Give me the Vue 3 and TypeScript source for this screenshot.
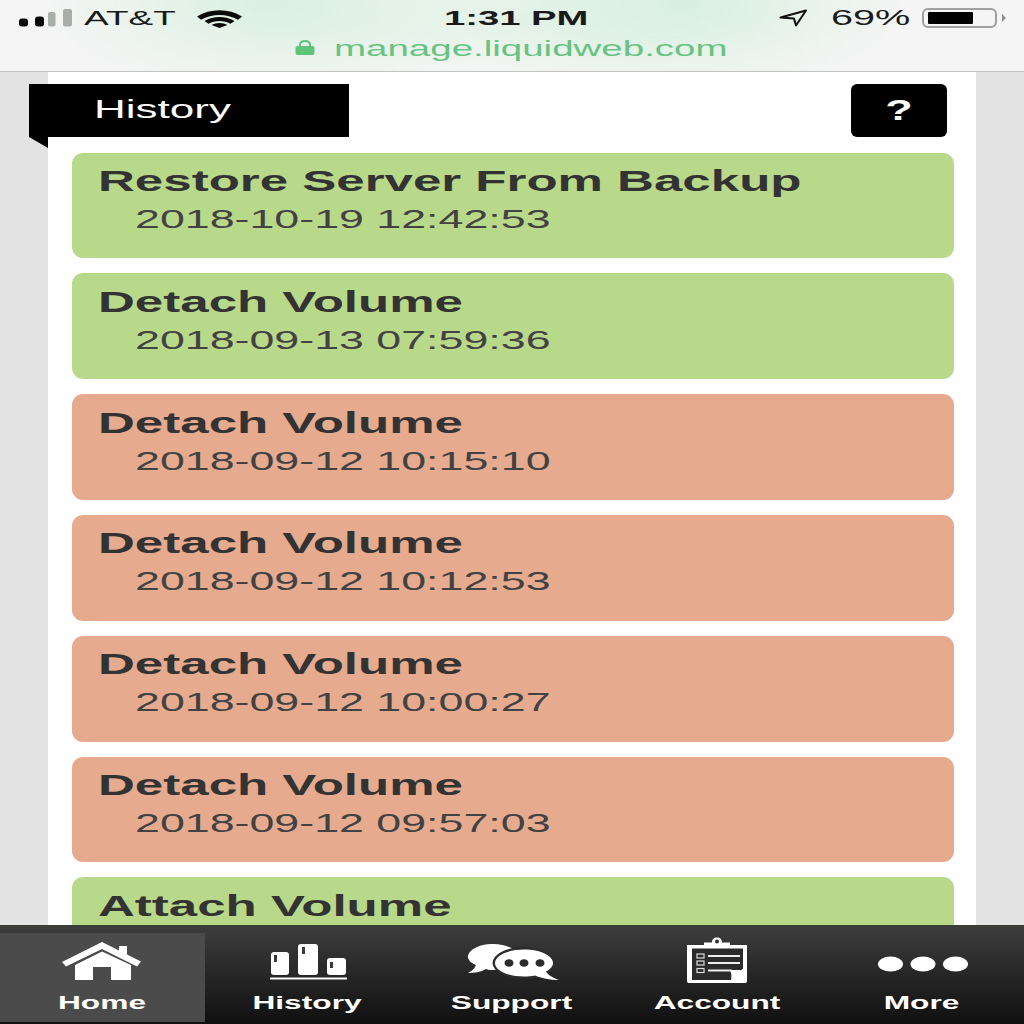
<script setup lang="ts">
interface Entry { title: string; date: string; ok: boolean }
const entries: Entry[] = [
  { title: 'Restore Server From Backup', date: '2018-10-19 12:42:53', ok: true },
  { title: 'Detach Volume', date: '2018-09-13 07:59:36', ok: true },
  { title: 'Detach Volume', date: '2018-09-12 10:15:10', ok: false },
  { title: 'Detach Volume', date: '2018-09-12 10:12:53', ok: false },
  { title: 'Detach Volume', date: '2018-09-12 10:00:27', ok: false },
  { title: 'Detach Volume', date: '2018-09-12 09:57:03', ok: false },
  { title: 'Attach Volume', date: '', ok: true },
]
</script>

<template>
  <div class="screen">
    <header class="chrome">
      <div class="status">
        <div class="left">
          <svg class="signal" width="54" height="18" viewBox="0 0 54 18">
            <rect x="0" y="9.500" width="9" height="8" rx="3" fill="#0a0a0a" />
            <rect x="16" y="7.500" width="9" height="10" rx="3" fill="#0a0a0a" />
            <rect x="29" y="3" width="7.500" height="14.500" rx="2" fill="#a9aeaa" />
            <rect x="44" y="0" width="9" height="17.500" rx="2" fill="#a9aeaa" />
          </svg>
          <span class="carrier"><span class="wide">AT&amp;T</span></span>
          <svg class="wifi" width="45" height="19" viewBox="0 -1 45 19">
            <path d="M0 6.500C13 -2 32 -2 45 6.500L41 9.800C30 3.500 15 3.500 4 9.800Z" fill="#0a0a0a" />
            <path d="M7.500 11C16 5.500 29 5.500 37.500 11L33.500 13.800C27 10 18 10 11.500 13.800Z" fill="#0a0a0a" />
            <path d="M14.500 15C19 12.300 26 12.300 30.500 15L22.500 18Z" fill="#0a0a0a" />
          </svg>
        </div>
        <span class="time"><span class="wide">1:31 PM</span></span>
        <div class="right">
          <svg class="arrow" width="29" height="18" viewBox="0 0 29 18">
            <path d="M1.500 8.500L27 1.500L17 16.500L15 9.500Z" fill="none" stroke="#111" stroke-width="2" stroke-linejoin="round" />
          </svg>
          <span class="pct"><span class="wide">69%</span></span>
          <div class="battery"><div class="charge"></div></div>
          <div class="nub"></div>
        </div>
      </div>
      <div class="url">
        <svg class="lock" width="20" height="15" viewBox="0 0 20 15">
          <path d="M5 7V5.200C5 2.600 7 1 10 1s5 1.600 5 4.200V7" fill="none" stroke="#5ec477" stroke-width="2" />
          <rect x="0.500" y="6" width="19" height="9" rx="2" fill="#5ec477" />
        </svg>
        <span class="host"><span class="wide">manage.liquidweb.com</span></span>
      </div>
    </header>

    <main class="viewport">
      <section class="page">
        <div class="head">
          <div class="flag"><span class="wide">History</span></div>
          <button class="help"><span class="wide">?</span></button>
        </div>
        <div class="list">
          <article v-for="(e, i) in entries" :key="i" class="card" :class="e.ok ? 'ok' : 'bad'">
            <div class="title"><span class="wide">{{ e.title }}</span></div>
            <div class="date"><span class="wide">{{ e.date }}</span></div>
          </article>
        </div>
      </section>
    </main>

    <nav class="tabs">
      <div class="tab active">
        <div class="icon">
          <svg width="80" height="40" viewBox="0 0 80 40">
            <path d="M0 20L40 0L57 8.500V4H65V12.500L79 19.500L75 24.500L40 7L4 24.500Z" fill="#fff" />
            <path d="M13 23L40 9.500L69 23V38H49V25H31V38H13Z" fill="#fff" />
          </svg>
        </div>
        <span class="label"><span class="wide">Home</span></span>
      </div>
      <div class="tab">
        <div class="icon">
          <svg class="bars" width="77" height="36" viewBox="0 0 77 36">
            <rect x="1" y="8" width="18" height="23" rx="3" fill="#fff" />
            <rect x="28" y="0" width="20" height="31" rx="3" fill="#fff" />
            <rect x="57" y="14" width="19" height="17" rx="3" fill="#fff" />
            <rect x="4" y="11" width="3" height="7" fill="#3a3a3a" />
            <rect x="32" y="3" width="3" height="7" fill="#3a3a3a" />
            <rect x="60" y="18" width="3" height="6" fill="#3a3a3a" />
            <rect x="0" y="33.500" width="77" height="2" fill="#fff" />
          </svg>
        </div>
        <span class="label"><span class="wide">History</span></span>
      </div>
      <div class="tab">
        <div class="icon">
          <svg class="chat" width="92" height="37" viewBox="0 0 92 37">
            <path d="M25 0C39 0 50 6 50 13C50 20 39 26 25 26C22 26 20 26 18 25C13 28 6 29 0 29C4 27 7 24 8 21C3 19 0 16 0 13C0 6 11 0 25 0Z" fill="#fff" />
            <ellipse cx="56" cy="19" rx="31.500" ry="16" fill="#2c2c2c" />
            <path d="M56 5.500C72 5.500 85 11.500 85 19C85 22.500 82 25.500 78 27.500C80 31 85 34 91 36C82 36 73 34 67 31.500C63.500 32.200 60 32.500 56 32.500C40 32.500 27 26.500 27 19C27 11.500 40 5.500 56 5.500Z" fill="#fff" />
            <ellipse cx="41" cy="19" rx="4.500" ry="3.800" fill="#2c2c2c" />
            <ellipse cx="56" cy="19" rx="4.500" ry="3.800" fill="#2c2c2c" />
            <ellipse cx="72" cy="19" rx="4.500" ry="3.800" fill="#2c2c2c" />
          </svg>
        </div>
        <span class="label"><span class="wide">Support</span></span>
      </div>
      <div class="tab">
        <div class="icon">
          <svg class="board" width="62" height="50" viewBox="0 0 62 50">
            <path d="M1 8H18V5.500H26C26 2 28 0.500 31 0.500S36 2 36 5.500H44V8H61V44C61 45.500 60 46 59 46H3C2 46 1 45.500 1 44Z" fill="#fff" />
            <circle cx="31" cy="4.500" r="2" fill="#333" />
            <path d="M6 11.500H57V31.500L45 43H6Z" fill="#2b2b2b" />
            <path d="M45 43C46 38 45 35 44 33H57Z" fill="#fff" />
            <rect x="11" y="17" width="7" height="4" fill="none" stroke="#ddd" stroke-width="1.200" />
            <rect x="11" y="24" width="7" height="4" fill="none" stroke="#ddd" stroke-width="1.200" />
            <rect x="11" y="31.500" width="7" height="4" fill="none" stroke="#ddd" stroke-width="1.200" />
            <rect x="22" y="18" width="32" height="2" fill="#eee" />
            <rect x="22" y="25" width="32" height="2" fill="#eee" />
            <rect x="22" y="32.500" width="24" height="2" fill="#eee" />
          </svg>
        </div>
        <span class="label"><span class="wide">Account</span></span>
      </div>
      <div class="tab">
        <div class="icon">
          <svg class="dots" width="90" height="16" viewBox="0 0 90 16">
            <ellipse cx="12.500" cy="8" rx="12.500" ry="7.500" fill="#fff" />
            <ellipse cx="45" cy="8" rx="12.500" ry="7.500" fill="#fff" />
            <ellipse cx="77.500" cy="8" rx="12.500" ry="7.500" fill="#fff" />
          </svg>
        </div>
        <span class="label"><span class="wide">More</span></span>
      </div>
    </nav>
  </div>
</template>

<style scoped>
.screen {
  width: 1024px;
  height: 1024px;
  display: flex;
  flex-direction: column;
  overflow: hidden;
  background: #e3e3e3;
  font-family: "Liberation Sans", Arial, sans-serif;
}
.wide {
  display: inline-block;
  white-space: nowrap;
  transform: scaleX(1.76);
  transform-origin: left center;
}
.chrome {
  height: 72px;
  flex: none;
  box-sizing: border-box;
  border-bottom: 1px solid #c2c4c3;
  background:
    radial-gradient(ellipse 230px 90px at 270px 5px, #daf0e0 0%, rgba(218, 240, 224, 0) 100%),
    radial-gradient(ellipse 230px 90px at 680px 5px, #d8f0df 0%, rgba(216, 240, 223, 0) 100%),
    radial-gradient(ellipse 260px 60px at 500px 20px, #e6f3e9 0%, rgba(230, 243, 233, 0) 100%),
    #f5f5f5;
}
.status {
  position: relative;
  display: flex;
  justify-content: space-between;
  align-items: center;
  height: 36px;
  padding: 0 18px 0 19px;
  font-size: 21px;
  color: #1a1a1a;
}
.left, .right {
  display: flex;
  align-items: center;
}
.signal { margin-right: 11px; }
.carrier { width: 113px; }
.time {
  position: absolute;
  left: 444px;
  top: 6px;
  font-weight: 700;
  font-size: 21px;
}
.time .wide { transform: scaleX(1.82); }
.arrow { margin-right: 23px; margin-left: 1px; }
.pct { width: 91px; font-size: 22px; }
.pct .wide { transform: scaleX(1.8); }
.battery {
  width: 75px;
  height: 20px;
  box-sizing: border-box;
  border: 2px solid #a0a0a0;
  border-radius: 6px;
  padding: 2px 4px;
}
.charge { width: 45px; height: 12px; background: #000; border-radius: 1px; }
.nub {
  width: 4px;
  height: 8px;
  margin-left: 5px;
  background: #8f8f8f;
  clip-path: polygon(0 0, 100% 50%, 0 100%);
}
.url {
  display: flex;
  align-items: center;
  height: 24px;
  padding-left: 295px;
  font-size: 22.5px;
  color: #68c382;
}
.lock { margin-right: 19px; margin-top: -2px; }
.host { display: block; margin-top: 1px; }
.host .wide { transform: scaleX(1.71); }

.viewport {
  flex: 1;
  min-height: 0;
  overflow: hidden;
  padding: 0 48px;
}
.page {
  height: 100%;
  background: #fff;
  padding: 12px 22px 0 24px;
}
.head {
  display: flex;
  justify-content: space-between;
  height: 68.6px;
  padding-right: 7px;
  margin-left: -43px;
}
.flag {
  position: relative;
  width: 320px;
  height: 53px;
  box-sizing: border-box;
  padding-left: 65px;
  background: #000;
  color: #fff;
  font-size: 25px;
  line-height: 51px;
}
.flag::after {
  content: "";
  position: absolute;
  left: 0;
  top: 53px;
  width: 19px;
  height: 11px;
  background: #000;
  clip-path: polygon(0 0, 100% 0, 100% 100%);
}
.help {
  width: 96px;
  height: 53px;
  border: 0;
  border-radius: 6px;
  background: #000;
  color: #fff;
  font: 700 29px "Liberation Sans", Arial, sans-serif;
  padding: 0;
  display: flex;
  align-items: center;
  justify-content: center;
}
.help .wide { transform-origin: center; transform: scaleX(1.55); }
.list {
  display: flex;
  flex-direction: column;
  gap: 15px;
}
.card {
  flex: none;
  height: 105.8px;
  border-radius: 11px;
  box-sizing: border-box;
  padding: 10.4px 26px 0;
  color: #333;
}
.ok { background: #b9d98a; }
.bad { background: #e6aa8f; }
.title {
  font-size: 29px;
  font-weight: 700;
  line-height: 36px;
}
.date {
  font-size: 25px;
  line-height: 40px;
  padding-left: 37px;
  color: #424242;
}
.date .wide { transform: scaleX(1.79); }
.tabs {
  flex: none;
  height: 99px;
  box-sizing: border-box;
  display: grid;
  grid-template-columns: repeat(5, 1fr);
  padding: 7px 0 2px;
  background: linear-gradient(180deg, #3d3d3d 0%, #2b2b2b 40%, #101010 100%);
  border-top: 1px solid #3a4030;
}
.tab {
  display: flex;
  flex-direction: column;
  align-items: center;
  color: #fff;
}
.active { background: #4b4b4b; }
.icon {
  height: 58px;
  display: flex;
  align-items: center;
  justify-content: center;
}
.bars { margin-left: 2px; }
.chat { margin-left: 4px; }
.board { margin-left: 1px; }
.dots { margin-top: 4px; margin-left: 2px; }
.label {
  font-size: 18px;
  font-weight: 700;
  line-height: 24px;
}
.label .wide { transform-origin: center; }
</style>
